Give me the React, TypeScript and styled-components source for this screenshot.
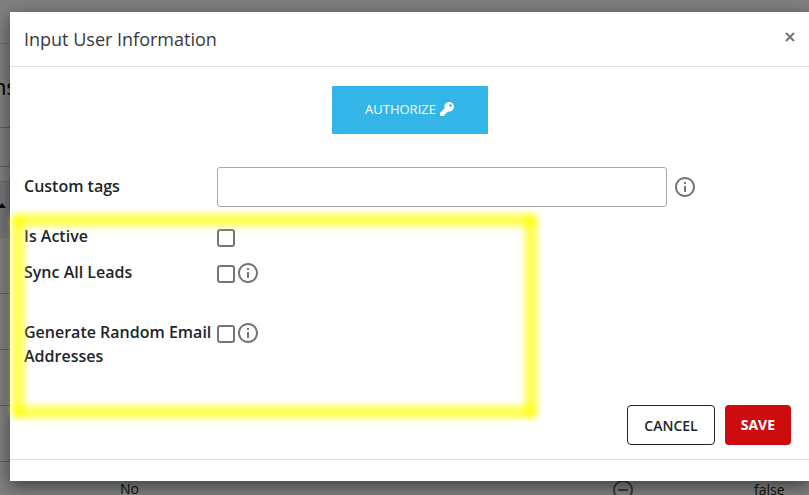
import React from "react";
import styled, { createGlobalStyle } from "styled-components";

const GlobalStyle = createGlobalStyle`
  * { box-sizing: border-box; }
  html, body { margin: 0; height: 100%; overflow: hidden; }
  #root { height: 100%; }
  body, button, input { font-family: "Open Sans", "Noto Sans", sans-serif; }
  body { background: #fff; color: #212529; font-size: 14px; }
`;

const Screen = styled.div`
  position: relative;
  min-height: 100%;
`;

const Page = styled.main`
  height: 100vh;
  overflow: hidden;
`;

const PageBar = styled.div`
  height: 44px;
  border-bottom: 1px solid #dcdcdc;
`;

const PageTitle = styled.h1`
  display: flex;
  align-items: center;
  justify-content: flex-end;
  width: 17px;
  height: 83px;
  margin: 0;
  color: #000;
  font-size: 22px;
  font-weight: 500;
`;

const PageHeading = styled.div`
  border-bottom: 1px solid #b8b8b8;
`;

const FilterBar = styled.div`
  height: 39px;
  border-bottom: 1px solid #b4bac0;
`;

const Table = styled.table`
  width: 100%;
  margin-top: 14px;
  border-collapse: separate;
  border-spacing: 0;
  table-layout: fixed;
  border-top: 1px solid #c8ccd2;

  thead { background: #e6e9f0; }
  th, td { height: 56px; padding: 0; text-align: left; font-weight: 400; }
  td { border-bottom: 1px solid #b8b8b8; }
`;

const Col = styled.col<{ $width?: number }>`
  width: ${({ $width }) => ($width ? `${$width}px` : "auto")};
`;

const SortCaret = styled.svg`
  display: block;
  width: 8px;
  height: 5px;
  margin-left: -2px;
  margin-bottom: 10px;
`;

const CellText = styled.span`
  display: block;
  padding-bottom: 2px;
`;

const RoundIcon = styled.svg`
  display: block;
  flex: none;
  width: 24px;
  height: 24px;
  fill: #757575;
`;

const Backdrop = styled.div`
  position: absolute;
  inset: 0;
  padding: 12px 0 0 10px;
  background: rgba(0, 0, 0, 0.5);
`;

const Dialog = styled.section`
  background: #fff;
  box-shadow: 0 5px 15px rgba(0, 0, 0, 0.5);
`;

const DialogHeader = styled.header`
  display: flex;
  align-items: center;
  justify-content: space-between;
  height: 55px;
  padding: 0 11px 0 14px;
  border-bottom: 1px solid #dfdfeb;
`;

const DialogTitle = styled.h2`
  margin: 0;
  color: #343a40;
  font-size: 18px;
  line-height: 24px;
  font-weight: 400;
`;

const CloseButton = styled.button`
  display: grid;
  place-items: center;
  width: 16px;
  height: 16px;
  margin-bottom: 5px;
  padding: 0;
  border: 0;
  background: none;

  svg { width: 10px; height: 10px; stroke: #757575; stroke-width: 2; }
`;

const DialogBody = styled.form`
  display: flex;
  flex-direction: column;
  padding: 19px 18px 14px 14px;
`;

const AuthorizeButton = styled.button`
  display: flex;
  align-items: center;
  justify-content: center;
  align-self: center;
  gap: 4px;
  width: 156px;
  height: 48px;
  margin-left: 4px;
  margin-bottom: 33px;
  padding: 0 0 2px;
  border: 0;
  border-radius: 1px;
  background: #34b5e7;
  color: #fff;
  font-size: 13px;

  svg { width: 14px; height: 14px; fill: #fff; }
`;

const Fields = styled.div`
  display: flex;
  flex-direction: column;
`;

const FieldRow = styled.div<{ $gap?: number }>`
  display: grid;
  grid-template-columns: 193px 1fr;
  align-items: start;
  margin-bottom: ${({ $gap }) => $gap ?? 11}px;
`;

const FieldLabel = styled.label<{ $tall?: boolean }>`
  color: #212529;
  font-size: 16px;
  line-height: ${({ $tall }) => ($tall ? 38 : 24)}px;
  font-weight: 600;
`;

const Control = styled.div<{ $tall?: boolean }>`
  display: flex;
  align-items: center;
  min-height: 25px;
  padding-top: ${({ $tall }) => ($tall ? 0 : 1)}px;
  gap: ${({ $tall }) => ($tall ? 6 : 1)}px;
`;

const TextInput = styled.input`
  flex: 0 1 450px;
  min-width: 0;
  height: 40px;
  padding: 0 12px;
  border: 1px solid #a0a8b0;
  border-radius: 3px;
  background: #fff;
  font-size: 16px;
`;

const Checkbox = styled.input`
  appearance: none;
  flex: none;
  width: 18px;
  height: 18px;
  margin: 2px 0 0;
  border: 2px solid #757575;
  border-radius: 3px;
  background: #fff;

  &:checked { background: #757575; }
`;

const Actions = styled.div`
  display: flex;
  justify-content: flex-end;
  gap: 10px;
`;

const ActionButton = styled.button<{ $primary?: boolean }>`
  height: 40px;
  padding: ${({ $primary }) => ($primary ? "0 16px 2px" : "0 16px")};
  border: ${({ $primary }) => ($primary ? "0" : "1px solid #212529")};
  border-radius: 4px;
  background: ${({ $primary }) => ($primary ? "#cc0c0f" : "#fff")};
  color: ${({ $primary }) => ($primary ? "#fff" : "#212529")};
  font-size: 14px;
  font-weight: ${({ $primary }) => ($primary ? 700 : 600)};
`;

const DialogFooter = styled.footer`
  height: 22px;
  border-top: 1px solid #dee2e6;
`;

const Marker = styled.svg`
  position: absolute;
  left: 0;
  top: 202px;
  width: 550px;
  height: 230px;
  pointer-events: none;
`;

const InfoIcon = () => (
  <RoundIcon viewBox="0 0 24 24" role="img" aria-label="More information">
    <path d="M11 7h2v2h-2zm0 4h2v6h-2zm1-9C6.48 2 2 6.48 2 12s4.48 10 10 10 10-4.48 10-10S17.52 2 12 2zm0 18c-4.41 0-8-3.59-8-8s3.59-8 8-8 8 3.59 8 8-3.59 8-8 8z" />
  </RoundIcon>
);

const MinusIcon = () => (
  <RoundIcon viewBox="0 0 24 24" aria-hidden="true">
    <path d="M7 11v2h10v-2H7zm5-9C6.48 2 2 6.48 2 12s4.48 10 10 10 10-4.48 10-10S17.52 2 12 2zm0 18c-4.41 0-8-3.59-8-8s3.59-8 8-8 8 3.59 8 8-3.59 8-8 8z" />
  </RoundIcon>
);

const KeyIcon = () => (
  <svg viewBox="0 0 512 512" aria-hidden="true">
    <path d="M512 176.001C512 273.203 433.202 352 336 352c-11.22 0-22.19-1.062-32.827-3.069l-24.012 27.014A23.999 23.999 0 0 1 261.223 384H224v40c0 13.255-10.745 24-24 24h-40v40c0 13.255-10.745 24-24 24H24c-13.255 0-24-10.745-24-24v-78.059c0-6.365 2.529-12.47 7.029-16.971l161.802-161.802C163.108 213.814 160 195.271 160 176 160 78.798 238.797.001 335.999 0 433.488-.001 512 78.511 512 176.001zM336 128c0 26.51 21.49 48 48 48s48-21.49 48-48-21.49-48-48-48-48 21.49-48 48z" />
  </svg>
);

export default function App() {
  return (
    <Screen>
      <GlobalStyle />
      <Page>
        <PageBar />
        <PageHeading>
          <PageTitle>ns</PageTitle>
        </PageHeading>
        <FilterBar />
        <Table>
          <colgroup>
            <Col $width={120} />
            <Col />
            <Col $width={143} />
            <Col $width={55} />
          </colgroup>
          <thead>
            <tr>
              <th colSpan={4}>
                <SortCaret viewBox="0 0 8 5">
                  <path d="M0 5 4 0l4 5z" fill="#111" />
                </SortCaret>
              </th>
            </tr>
          </thead>
          <tbody>
            {[0, 1, 2, 3].map((row) => (
              <tr key={row}>
                <td colSpan={4} />
              </tr>
            ))}
            <tr>
              <td />
              <td><CellText>No</CellText></td>
              <td><MinusIcon /></td>
              <td>false</td>
            </tr>
          </tbody>
        </Table>
      </Page>

      <Backdrop>
        <Dialog role="dialog" aria-labelledby="dialog-title">
          <DialogHeader>
            <DialogTitle id="dialog-title">Input User Information</DialogTitle>
            <CloseButton type="button" aria-label="Close">
              <svg viewBox="0 0 10 10"><path d="M1 1l8 8M9 1L1 9" /></svg>
            </CloseButton>
          </DialogHeader>
          <DialogBody onSubmit={(event) => event.preventDefault()}>
            <AuthorizeButton type="button">
              AUTHORIZE
              <KeyIcon />
            </AuthorizeButton>
            <Fields>
              <FieldRow $gap={17}>
                <FieldLabel $tall htmlFor="tags">Custom tags</FieldLabel>
                <Control $tall>
                  <TextInput id="tags" type="text" />
                  <InfoIcon />
                </Control>
              </FieldRow>
              <FieldRow>
                <FieldLabel htmlFor="active">Is Active</FieldLabel>
                <Control>
                  <Checkbox id="active" type="checkbox" />
                </Control>
              </FieldRow>
              <FieldRow $gap={35}>
                <FieldLabel htmlFor="sync">Sync All Leads</FieldLabel>
                <Control>
                  <Checkbox id="sync" type="checkbox" />
                  <InfoIcon />
                </Control>
              </FieldRow>
              <FieldRow $gap={37}>
                <FieldLabel htmlFor="random">Generate Random Email Addresses</FieldLabel>
                <Control>
                  <Checkbox id="random" type="checkbox" />
                  <InfoIcon />
                </Control>
              </FieldRow>
            </Fields>
            <Actions>
              <ActionButton type="button">CANCEL</ActionButton>
              <ActionButton type="submit" $primary>SAVE</ActionButton>
            </Actions>
          </DialogBody>
          <DialogFooter />
        </Dialog>
      </Backdrop>

      <Marker viewBox="0 0 550 230" aria-hidden="true">
        <defs>
          <filter id="soft" x="0" y="0" width="550" height="230" filterUnits="userSpaceOnUse" colorInterpolationFilters="sRGB">
            <feGaussianBlur stdDeviation="3" />
          </filter>
        </defs>
        <g filter="url(#soft)" stroke="#ff0" strokeOpacity="0.68" strokeWidth="13" strokeLinecap="round">
          <path d="M18 18H531" />
          <path d="M18 210H531" />
          <path d="M18 18V210" />
          <path d="M531 18V210" />
        </g>
      </Marker>
    </Screen>
  );
}
